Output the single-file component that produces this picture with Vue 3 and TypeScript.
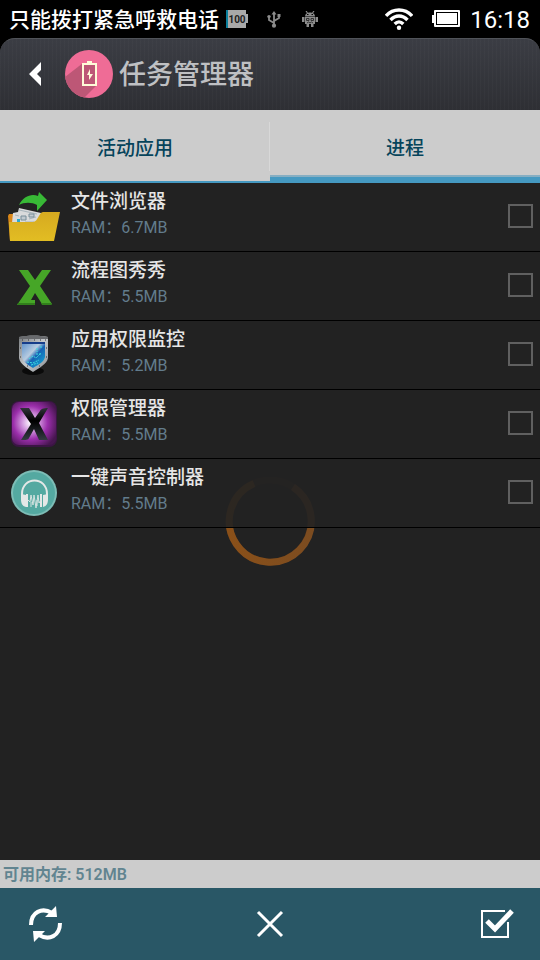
<script setup lang="ts">
import { ref } from 'vue'

interface ProcessItem {
  id: string
  name: string
  ram: string
  checked: boolean
}

const tabs = ['活动应用', '进程']
const activeTab = ref(1)

const processes = ref<ProcessItem[]>([
  { id: 'folder', name: '文件浏览器', ram: '6.7MB', checked: false },
  { id: 'flow', name: '流程图秀秀', ram: '5.5MB', checked: false },
  { id: 'shield', name: '应用权限监控', ram: '5.2MB', checked: false },
  { id: 'perm', name: '权限管理器', ram: '5.5MB', checked: false },
  { id: 'sound', name: '一键声音控制器', ram: '5.5MB', checked: false },
])

function clearSelection() {
  processes.value.forEach((p) => (p.checked = false))
}

function selectAll() {
  processes.value.forEach((p) => (p.checked = true))
}
</script>

<template>
  <div class="screen">
    <div class="status">
      <span class="carrier">只能拨打紧急呼救电话</span>
      <svg class="level" width="22" height="18" viewBox="0 0 22 18">
        <rect x="2" y="0" width="18" height="18" fill="#a9a9a9" />
        <rect x="0" y="0" width="2" height="18" fill="#0b7f9c" />
        <rect x="20" y="4" width="2" height="9" fill="#a9a9a9" />
        <text x="11" y="13" text-anchor="middle" class="level-text">100</text>
      </svg>
      <svg class="usb" width="14" height="17" viewBox="0 0 14 17" fill="none" stroke="#8c8c8c" stroke-width="1.8">
        <path d="M7 2v12M7 12L2 9V6M7 10l5-3V4" />
        <path d="M7 0l2.5 3.5h-5z" fill="#8c8c8c" stroke="none" />
        <circle cx="7" cy="14.7" r="2.1" fill="#8c8c8c" stroke="none" />
        <circle cx="2" cy="5.6" r="1.7" fill="#8c8c8c" stroke="none" />
        <path d="M10.5 3h3v3h-3z" fill="#8c8c8c" stroke="none" />
      </svg>
      <svg class="droid" width="16" height="16" viewBox="0 0 16 16">
        <path d="M4 0l1.5 2M12 0l-1.5 2" stroke="#8c8c8c" stroke-width="1.2" />
        <path d="M3 5.500c0-5.500 10-5.500 10 0z" fill="#8c8c8c" />
        <path d="M3 6h10v7H3zM0 6h2.500v5H0zM13.500 6H16v5h-2.500zM4.500 13h2.500v3H4.500zM9 13h2.500v3H9z" fill="#8c8c8c" />
        <path d="M5 3h1.500v1H5zM9.500 3H11v1H9.500z" fill="#000" />
        <path d="M4.500 7.500h2.500v2H4.500zM9 7.500h2.500v2H9zM5 12l1.500-1L8 12l1.500-1 1.500 1" fill="none" stroke="#333" />
      </svg>
      <svg class="wifi" width="28" height="22" viewBox="0 0 28 22" fill="none" stroke="#fff" stroke-width="3.4">
        <path d="M1 8C8 0 20 0 27 8" />
        <path d="M5.5 12c5-5.300 12-5.300 17 0" />
        <path d="M9.700 16c2.800-2.800 5.800-2.800 8.600 0" />
        <circle cx="14" cy="19.7" r="2.2" fill="#fff" stroke="none" />
      </svg>
      <svg class="battery" width="28" height="18" viewBox="0 0 28 18">
        <rect x="0" y="5" width="3" height="8" fill="#fff" />
        <rect x="2" y="0" width="26" height="17" rx="1" fill="#fff" />
        <rect x="4.5" y="2.5" width="21" height="12" fill="#fff" stroke="#000" />
      </svg>
      <span class="clock">16:18</span>
    </div>

    <header class="header">
      <button class="back" aria-label="返回">
        <svg width="13" height="24" viewBox="0 0 13 24">
          <path d="M0 12L12 0v8L8 12l4 4v8z" fill="#fff" />
        </svg>
      </button>
      <svg class="logo" width="48" height="48" viewBox="0 0 48 48">
        <defs>
          <clipPath id="logo-clip"><circle cx="24" cy="24" r="24" /></clipPath>
        </defs>
        <circle cx="24" cy="24" r="24" fill="#ef6c96" />
        <path d="M18 13L0 27v21h19L32 35z" fill="#bd5776" clip-path="url(#logo-clip)" />
        <rect x="18" y="14" width="13" height="21" fill="#bd5776" stroke="#fffbd8" stroke-width="2" />
        <rect x="22" y="11" width="5" height="3" fill="#fffbd8" />
        <path d="M25 19l-3 6h2v5l4-6h-3z" fill="#fffbd8" />
      </svg>
      <h1 class="title">任务管理器</h1>
    </header>

    <nav class="tabs">
      <button
        v-for="(tab, i) in tabs"
        :key="tab"
        class="tab"
        :class="{ active: i === activeTab }"
        @click="activeTab = i"
      >
        {{ tab }}
      </button>
    </nav>

    <main class="content">
      <svg class="spinner" width="90" height="90" viewBox="0 1 90 90" fill="none" stroke-width="7">
        <defs>
          <linearGradient id="spin" x1="0" y1="0" x2="1" y2="0">
            <stop offset="0" stop-color="#8a5019" />
            <stop offset="1" stop-color="#7c4c20" />
          </linearGradient>
        </defs>
        <circle cx="45" cy="45" r="41" stroke="#38291e" />
        <path d="M29 7.500A41 41 0 1 0 68 11" stroke="url(#spin)" />
      </svg>
      <ul class="list">
        <li v-for="item in processes" :key="item.id">
          <label class="row">
            <svg v-if="item.id === 'folder'" class="icon" viewBox="0 0 54 54">
              <defs>
                <linearGradient id="gold" x1="0" y1="0" x2="0" y2="1">
                  <stop offset="0" stop-color="#d6aa20" /><stop offset="1" stop-color="#e2bd23" />
                </linearGradient>
              </defs>
              <path d="M1 26l1-2h5v27H3z" fill="#da8718" />
              <path d="M5 33l1-10 5-1 1-4 22 5 2 4-4 8-24 6z" fill="#d9dadb" />
              <path d="M12 20l18 4M8 25l4 1M22 29l7-2M18 32h9" stroke="#a7b3ba" stroke-width="1" />
              <path d="M14 26h5v4h-5zM22 24h5v3h-5z" fill="#c1c9cf" stroke="#788e99" />
              <path d="M10 29h3v3h-3z" fill="#2aa9d2" />
              <path d="M12 15C16 6 25 3 31 6l1-4 8 8-10 11v-6c-5-3-13-3-18 0z" fill="#38b936" />
              <path d="M2 32h24c5 0 6-10 10-10h17l-6 29H3z" fill="url(#gold)" />
            </svg>
            <svg v-else-if="item.id === 'flow'" class="icon" viewBox="0 0 54 54">
              <path d="M12 11h9l7 10 7-10h9L33 27l12 18H35l-7-11-4 7h4v5H10l13-19z" fill="#46a627" />
              <path d="M11 44h17v2H10zM34 44h10l1 2H35z" fill="#317f1b" />
            </svg>
            <svg v-else-if="item.id === 'shield'" class="icon" viewBox="0 0 54 54">
              <defs>
                <linearGradient id="steel" x1="0" y1="0" x2="1" y2="1">
                  <stop offset="0" stop-color="#777b7e" /><stop offset=".5" stop-color="#c6c9cc" /><stop offset="1" stop-color="#8b8f93" />
                </linearGradient>
                <linearGradient id="glass" x1="0" y1="0" x2="1" y2="1">
                  <stop offset="0" stop-color="#5f93cc" /><stop offset=".4" stop-color="#b8cce0" /><stop offset=".55" stop-color="#1763b5" /><stop offset="1" stop-color="#12b3d8" />
                </linearGradient>
              </defs>
              <ellipse cx="26" cy="43" rx="11" ry="4" fill="#0a0a0a" />
              <path d="M12 9c10-2 19-2 29 0v21c-1 6-9 10-15 14-6-4-13-8-14-14z" fill="url(#steel)" />
              <path d="M12 9c10-2 19-2 29 0v2H12z" fill="#686a6d" />
              <path d="M15 15h23v14c-1 5-7 8-12 11-5-3-10-6-11-11z" fill="url(#glass)" />
              <path d="M15 15h23" stroke="#173e8a" stroke-width="2" />
              <path d="M22 31l4-3 3 2 5-5M20 34l6 1 6-3M24 37l7-2M30 20v4M34 18v3M29 26h5" stroke="#3ee0e0" stroke-dasharray="2 1" fill="none" />
              <path d="M15 12h1M21 12h1M27 12h1M33 12h1M38 12h1M13 20h1M39 20h1M13 29h1M39 29h1M20 38h1M32 38h1" stroke="#333" />
            </svg>
            <svg v-else-if="item.id === 'perm'" class="icon" viewBox="0 0 54 54">
              <defs>
                <radialGradient id="violet" cx=".42" cy=".48" r=".65">
                  <stop offset="0" stop-color="#fff" /><stop offset=".25" stop-color="#d9a6e4" /><stop offset=".6" stop-color="#9b2eab" /><stop offset="1" stop-color="#471650" />
                </radialGradient>
                <linearGradient id="ink" x1="0" y1="0" x2="0" y2="1">
                  <stop offset="0" stop-color="#30333a" /><stop offset=".4" stop-color="#000" /><stop offset="1" stop-color="#343b42" />
                </linearGradient>
              </defs>
              <rect x="4" y="4" width="46" height="46" rx="8" fill="#3b1544" />
              <rect x="5" y="5" width="44" height="43" rx="7" fill="url(#violet)" />
              <path d="M13 11h9l6 10 5-7c1-2 3-3 8-3L32 26l9 17h-9l-5-11-5 9c-1 2-3 2-8 2l10-16z" fill="url(#ink)" />
            </svg>
            <svg v-else class="icon" viewBox="0 0 54 54">
              <circle cx="27" cy="27" r="23" fill="#7dbdb6" />
              <circle cx="27" cy="27" r="21" fill="#54a9a1" />
              <path d="M15 31v-3c0-18 25-18 25 0v3" fill="none" stroke="#e4e8e7" stroke-width="2" />
              <path d="M14 28l5 1v12c-4-1-5-4-5-8zM41 28l-5 1v12c4-1 5-4 5-8zM19 28h2v13h-2zM33 28h2v13h-2z" fill="#e4e8e7" />
              <path d="M21 34l2 2 1-7 2 10 1-10 2 13 2-13 1 8 2-3M24 36v5M30 34v6" fill="none" stroke="#d5e3e1" stroke-width="1" />
            </svg>
            <span class="info">
              <span class="name">{{ item.name }}</span>
              <span class="ram">RAM：{{ item.ram }}</span>
            </span>
            <input v-model="item.checked" class="check" type="checkbox" />
          </label>
        </li>
      </ul>
    </main>

    <div class="memory">可用内存: 512MB</div>

    <footer class="actions">
      <button class="action" aria-label="刷新">
        <svg class="refresh" width="34" height="36" viewBox="-2 0 34 36">
          <path d="M3 19C3 6 14 1 24 7M32 17c0 13-11 18-21 12" fill="none" stroke="#fff" stroke-width="4" />
          <path d="M28 0l1 11H17zM6 36L5 25h12z" fill="#fff" />
        </svg>
      </button>
      <button class="action" aria-label="清除选择" @click="clearSelection">
        <svg width="28" height="28" viewBox="0 0 28 28">
          <path d="M2 2l24 24M26 2L2 26" stroke="#fff" stroke-width="3" />
        </svg>
      </button>
      <button class="action" aria-label="全选" @click="selectAll">
        <svg width="34" height="30" viewBox="0 0 34 30" fill="none" stroke="#fff">
          <path d="M25 2H2v26h26V13" stroke-width="2" />
          <path d="M7 12l8 8L32 2" stroke-width="5" />
        </svg>
      </button>
    </footer>
  </div>
</template>

<style>
body {
  margin: 0;
  background: #222;
}
</style>

<style scoped>
.screen {
  display: flex;
  flex-direction: column;
  min-height: 100vh;
  background: #222;
  font-family: Roboto, "Noto Sans CJK SC", sans-serif;
}

button {
  border: 0;
  padding: 0;
  background: none;
  font-family: inherit;
  cursor: pointer;
}

svg {
  display: block;
  flex: none;
}

.status {
  display: flex;
  align-items: center;
  height: 38px;
  padding: 0 10px 0 9px;
  box-sizing: border-box;
  background: #000;
  color: #fff;
}

.carrier {
  padding-top: 2px;
  font-size: 21px;
  font-weight: 500;
  line-height: 36px;
  white-space: nowrap;
}

.level {
  margin-left: 7px;
}

.level-text {
  font: bold 10px Roboto, sans-serif;
  fill: #222;
}

.usb {
  margin-left: 19px;
}

.droid {
  margin-left: 21px;
}

.wifi {
  margin-left: auto;
}

.battery {
  margin-left: 19px;
}

.clock {
  margin-left: 10px;
  padding-top: 2px;
  font-size: 24px;
  line-height: 36px;
}

.header {
  display: flex;
  align-items: center;
  height: 72px;
  padding-bottom: 2px;
  box-sizing: border-box;
  border-top: 1px solid #505359;
  border-radius: 15px 15px 0 0;
  background:
    repeating-linear-gradient(90deg, rgba(255, 255, 255, 0.02) 0 1px, transparent 1px 4px),
    linear-gradient(#3b3d44, #2e2f34);
}

.screen > .header {
  box-shadow: 0 -15px 0 15px #000;
  clip-path: inset(0);
}

.back {
  display: flex;
  width: 36px;
  padding-left: 29px;
  box-sizing: content-box;
}

.logo {
  margin-left: 0;
}

.title {
  margin: 0 0 0 6px;
  padding-top: 2px;
  color: #bfc0c3;
  font-size: 27px;
  font-weight: 500;
  line-height: 40px;
}

.tabs {
  display: flex;
  height: 73px;
  background: #ccc;
}

.tab {
  flex: 1;
  padding-top: 2px;
  border-bottom: 2px solid #4599c1;
  color: #06445b;
  font-size: 19px;
  font-weight: 500;
  background: linear-gradient(#d8d8d8, #d8d8d8) right 12px / 1px 49px no-repeat;
}

.tab.active {
  padding-top: 6px;
  border-bottom: 6px solid #4599c1;
  background: none;
  box-shadow: inset 0 -2px #86aec2;
}

.content {
  position: relative;
  flex: 1;
}

.spinner {
  position: absolute;
  top: 50%;
  left: 50%;
  transform: translate(-50%, -50%);
}

.list {
  position: relative;
  margin: 0;
  padding: 0;
  list-style: none;
}

.row {
  display: flex;
  align-items: center;
  height: 69px;
  padding: 0 7px;
  box-sizing: border-box;
  border-bottom: 1px solid #000;
  background: rgba(34, 34, 34, 0.9);
}

.icon {
  width: 54px;
  height: 54px;
}

.info {
  display: flex;
  flex: 1;
  flex-direction: column;
  align-self: flex-start;
  padding-left: 10px;
}

.name {
  padding-top: 5px;
  color: #e6e6e6;
  font-size: 19px;
  font-weight: 500;
  line-height: 28px;
}

.ram {
  color: #627c8c;
  font-size: 16px;
  line-height: 24px;
}

.check {
  width: 25px;
  height: 24px;
  margin: 0 0 2px;
  border: 2px solid #606060;
  appearance: none;
  background: transparent;
}

.check:checked {
  background: #4599c1;
}

.memory {
  padding: 1px 0 0 3px;
  background: #ccc;
  color: #618490;
  font-size: 16px;
  font-weight: 600;
  line-height: 27px;
}

.actions {
  display: flex;
  align-items: center;
  justify-content: space-between;
  height: 72px;
  padding: 0 26px;
  background: #295766;
}

.refresh {
  overflow: visible;
}
</style>
